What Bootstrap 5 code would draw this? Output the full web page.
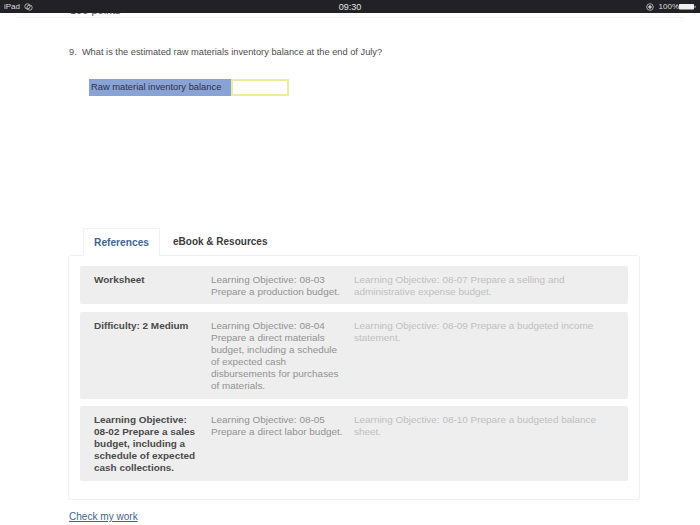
<!DOCTYPE html>
<html lang="en">
<head>
<meta charset="utf-8">
<title>Question 9</title>
<link rel="stylesheet" href="https://cdn.jsdelivr.net/npm/bootstrap@5.3.0/dist/css/bootstrap.min.css">
<style>
html,body{width:700px;height:525px;overflow:hidden;background:#fff;}
body{font-family:"Liberation Sans",Arial,sans-serif;color:#444;}
.ios-bar{height:13px;background:#222226;color:#ddd;font-size:8px;line-height:13px;padding:0 4px;}
.ios-bar .clock{font-size:9px;color:#e4e4e4;position:absolute;left:0;right:0;text-align:center;top:0;line-height:14px;}
.status-icon{margin-right:5px;}
.clip-line{height:5px;overflow:hidden;border-bottom:1px solid #f4f4f4;margin:0 16px 0 16px;padding-left:54px;font-size:11px;line-height:1;color:#555;}
.clip-line span{display:block;margin-top:-8px;}
.qtext{font-size:9.28px;line-height:12px;color:#4d4d4d;margin:28px 0 0 69px;}
.qtable{margin:21px 0 0 89px;height:17px;width:200px;}
.qlabel{width:142px;background:#89a3d5;color:#2a3246;font-size:9.35px;line-height:16px;padding-left:2px;}
.qinput{width:58px;background:#fff;border:2px solid #eeeba0;}
.tabs-row{margin:132px 0 0 83px;height:28px;}
.tab-on{width:77px;height:28px;border:1px solid #f2f2f2;border-bottom:0;background:#fff;color:#3f6690;font-weight:700;font-size:10.2px;line-height:28px;text-align:center;position:relative;z-index:1;}
.tab-off{color:#3a3a3a;font-weight:700;font-size:10px;line-height:28px;padding-left:13px;}
.ref-panel{margin:-1px 0 0 68px;width:572px;height:245px;border:1px solid #f0f0f0;border-radius:3px;padding:10px 11px;}
.ref-row{background:#eee;border-radius:2px;padding:8px 0 0 14px;font-size:9.95px;line-height:12px;}
.ref-row + .ref-row{margin-top:7.5px;}
.r1{height:38px;}.r2{height:87px;}.r3{height:75px;}
.c-a{width:117px;font-weight:700;color:#4a4a4a;padding-right:12px;}
.c-b{width:143px;color:#929292;padding-right:10px;}
.c-c{width:260px;color:#c0c0c0;}
.check{display:block;margin:11px 0 0 69px;font-size:10.05px;line-height:12px;color:#44648f;}
</style>
</head>
<body>
<div class="ios-bar d-flex justify-content-between position-relative">
  <div class="d-flex align-items-center gap-1"><span>iPad</span>
    <svg width="9" height="8" viewBox="0 0 9 8" fill="none" stroke="#ccc" stroke-width=".8"><circle cx="3.4" cy="3.4" r="2.6"/><circle cx="5.6" cy="4.6" r="2.6"/></svg></div>
  <div class="clock">09:30</div>
  <div class="d-flex align-items-center">
    <svg class="status-icon" width="8" height="8" viewBox="0 0 8 8" fill="none" stroke="#ccc" stroke-width=".8"><circle cx="4" cy="4" r="3.3"/><circle cx="4" cy="4" r="1.3" fill="#ccc"/></svg>
    <span>100%</span>
    <svg width="17" height="7" viewBox="0 0 17 7"><rect x="0" y="1" width="15" height="5.5" rx=".8" fill="#eee"/><rect x="15.5" y="2.8" width="1" height="2" fill="#ccc"/></svg>
  </div>
</div>
<div class="clip-line"><span>100 points</span></div>
<p class="qtext">9.&nbsp; What is the estimated raw materials inventory balance at the end of July?</p>
<div class="qtable d-flex">
  <div class="qlabel">Raw material inventory balance</div>
  <div class="qinput"></div>
</div>
<div class="tabs-row d-flex">
  <div class="tab-on">References</div>
  <div class="tab-off">eBook &amp; Resources</div>
</div>
<div class="ref-panel">
  <div class="ref-row r1 d-flex">
    <div class="c-a">Worksheet</div>
    <div class="c-b">Learning Objective: 08-03 Prepare a production budget.</div>
    <div class="c-c">Learning Objective: 08-07 Prepare a selling and administrative expense budget.</div>
  </div>
  <div class="ref-row r2 d-flex">
    <div class="c-a">Difficulty: 2 Medium</div>
    <div class="c-b">Learning Objective: 08-04 Prepare a direct materials budget, including a schedule of expected cash disbursements for purchases of materials.</div>
    <div class="c-c">Learning Objective: 08-09 Prepare a budgeted income statement.</div>
  </div>
  <div class="ref-row r3 d-flex">
    <div class="c-a">Learning Objective: 08-02 Prepare a sales budget, including a schedule of expected cash collections.</div>
    <div class="c-b">Learning Objective: 08-05 Prepare a direct labor budget.</div>
    <div class="c-c">Learning Objective: 08-10 Prepare a budgeted balance sheet.</div>
  </div>
</div>
<a class="check" href="#">Check my work</a>
<script src="https://cdn.jsdelivr.net/npm/bootstrap@5.3.0/dist/js/bootstrap.bundle.min.js"></script>
</body>
</html>
